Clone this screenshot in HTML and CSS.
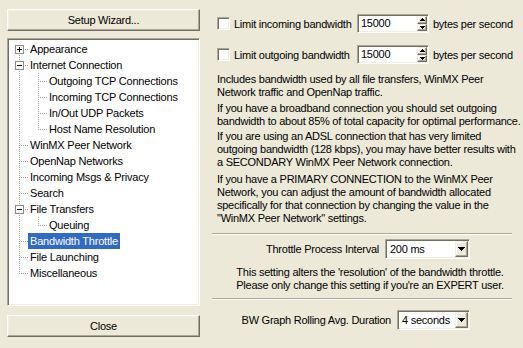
FILE: index.html
```html
<!DOCTYPE html>
<html lang="en">
<head>
    <meta charset="UTF-8">
    <meta name="viewport" content="width=device-width, initial-scale=1.0">
    <title>Preferences - Bandwidth Throttle</title>
    <link rel="stylesheet" href="styles.css">
</head>
<body>
    <div class="dialog">
        <div class="sidebar">
            <button class="btn">Setup Wizard...</button>
            <ul class="tree sunken">
                <li class="node"><span class="conn first"><svg class="toggle" width="9" height="9" viewBox="0 0 9 9"><rect x="0.5" y="0.5" width="8" height="8" fill="#fff" stroke="#8c8c8c"/><path d="M2 4.5h5M4.5 2v5" stroke="#000"/></svg></span><span class="label">Appearance</span></li>
                <li class="node"><span class="conn tee"><svg class="toggle" width="9" height="9" viewBox="0 0 9 9"><rect x="0.5" y="0.5" width="8" height="8" fill="#fff" stroke="#8c8c8c"/><path d="M2 4.5h5" stroke="#000"/></svg></span><span class="label">Internet Connection</span></li>
                <li class="node"><span class="conn pipe"></span><span class="conn tee"></span><span class="label">Outgoing TCP Connections</span></li>
                <li class="node"><span class="conn pipe"></span><span class="conn tee"></span><span class="label">Incoming TCP Connections</span></li>
                <li class="node"><span class="conn pipe"></span><span class="conn tee"></span><span class="label">In/Out UDP Packets</span></li>
                <li class="node"><span class="conn pipe"></span><span class="conn ell"></span><span class="label">Host Name Resolution</span></li>
                <li class="node"><span class="conn tee"></span><span class="label">WinMX Peer Network</span></li>
                <li class="node"><span class="conn tee"></span><span class="label">OpenNap Networks</span></li>
                <li class="node"><span class="conn tee"></span><span class="label">Incoming Msgs &amp; Privacy</span></li>
                <li class="node"><span class="conn tee"></span><span class="label">Search</span></li>
                <li class="node"><span class="conn tee"><svg class="toggle" width="9" height="9" viewBox="0 0 9 9"><rect x="0.5" y="0.5" width="8" height="8" fill="#fff" stroke="#8c8c8c"/><path d="M2 4.5h5" stroke="#000"/></svg></span><span class="label">File Transfers</span></li>
                <li class="node"><span class="conn pipe"></span><span class="conn ell"></span><span class="label">Queuing</span></li>
                <li class="node"><span class="conn tee"></span><span class="label selected">Bandwidth Throttle</span></li>
                <li class="node"><span class="conn tee"></span><span class="label">File Launching</span></li>
                <li class="node"><span class="conn ell"></span><span class="label">Miscellaneous</span></li>
            </ul>
            <button class="btn">Close</button>
        </div>

        <div class="panel">
            <div class="limit-row">
                <span class="check sunken"></span>
                <span class="limit-label">Limit incoming bandwidth</span>
                <div class="spin sunken">
                    <span class="spin-value">15000</span>
                    <span class="spin-btns">
                        <span class="spin-btn raised"><svg width="5" height="3" viewBox="0 0 5 3"><path d="M2 0h1v1h1v1h1v1h-5v-1h1v-1h1z" fill="#000"/></svg></span>
                        <span class="spin-btn raised"><svg width="5" height="3" viewBox="0 0 5 3"><path d="M0 0h5v1h-1v1h-1v1h-1v-1h-1v-1h-1z" fill="#000"/></svg></span>
                    </span>
                </div>
                <span>bytes per second</span>
            </div>
            <div class="limit-row">
                <span class="check sunken"></span>
                <span class="limit-label">Limit outgoing bandwidth</span>
                <div class="spin sunken">
                    <span class="spin-value">15000</span>
                    <span class="spin-btns">
                        <span class="spin-btn raised"><svg width="5" height="3" viewBox="0 0 5 3"><path d="M2 0h1v1h1v1h1v1h-5v-1h1v-1h1z" fill="#000"/></svg></span>
                        <span class="spin-btn raised"><svg width="5" height="3" viewBox="0 0 5 3"><path d="M0 0h5v1h-1v1h-1v1h-1v-1h-1v-1h-1z" fill="#000"/></svg></span>
                    </span>
                </div>
                <span>bytes per second</span>
            </div>

            <p class="note note-intro">Includes bandwidth used by all file transfers, WinMX Peer<br>Network traffic and OpenNap traffic.</p>
            <p class="note gap-m">If you have a broadband connection you should set outgoing<br>bandwidth to about 85% of total capacity for optimal performance.</p>
            <p class="note gap-s">If you are using an ADSL connection that has very limited<br>outgoing bandwidth (128 kbps), you may have better results with<br>a SECONDARY WinMX Peer Network connection.</p>
            <p class="note gap-l">If you have a PRIMARY CONNECTION to the WinMX Peer<br>Network, you can adjust the amount of bandwidth allocated<br>specifically for that connection by changing the value in the<br>"WinMX Peer Network" settings.</p>

            <hr class="sep">

            <div class="combo-row interval-row">
                <span>Throttle Process Interval</span>
                <div class="combo interval-combo sunken">
                    <span class="combo-value">200 ms</span>
                    <span class="combo-btn raised"><svg width="7" height="4" viewBox="0 0 7 4"><path d="M0 0h7v1h-1v1h-1v1h-1v1h-1v-1h-1v-1h-1v-1h-1z" fill="#000"/></svg></span>
                </div>
            </div>
            <p class="note note-center">This setting alters the 'resolution' of the bandwidth throttle.<br>Please only change this setting if you're an EXPERT user.</p>

            <hr class="sep">

            <div class="combo-row graph-row">
                <span>BW Graph Rolling Avg. Duration</span>
                <div class="combo graph-combo sunken">
                    <span class="combo-value">4 seconds</span>
                    <span class="combo-btn raised"><svg width="7" height="4" viewBox="0 0 7 4"><path d="M0 0h7v1h-1v1h-1v1h-1v1h-1v-1h-1v-1h-1v-1h-1z" fill="#000"/></svg></span>
                </div>
            </div>
        </div>
    </div>
</body>
</html>
```

FILE: styles.css
```css
html,
body {
    margin: 0;
    height: 100%;
    overflow: hidden;
}

body {
    background-color: #ece9d8;
    font-family: "Liberation Sans", Arial, sans-serif;
    font-size: 11px;
    letter-spacing: -0.25px;
    color: #000;
}

.dialog {
    display: flex;
    padding: 9px 0 0 7px;
}

/* shared 3d borders */
.sunken {
    border: 1px solid;
    border-color: #aca899 #fff #fff #aca899;
    box-shadow: inset 1px 1px #716f64, inset -1px -1px #f1efe2;
    background-color: #fff;
}

.raised {
    border: 1px solid;
    border-color: #f1efe2 #716f64 #716f64 #f1efe2;
    box-shadow: inset -1px -1px #aca899, inset 1px 1px #fff;
    background-color: #ece9d8;
}

/* left side */
.sidebar {
    display: flex;
    flex-direction: column;
    flex: none;
    width: 193px;
}

.btn {
    height: 22px;
    padding: 0;
    font: inherit;
    letter-spacing: inherit;
    color: #000;
    background-color: #ece9d8;
    border: 1px solid;
    border-color: #fff #716f64 #716f64 #fff;
    box-shadow: inset -1px -1px #aca899, inset 1px 1px #f1efe2;
}

.tree {
    list-style: none;
    margin: 7px 0 9px;
    padding: 2px 1px 1px;
    height: 268px;
    box-sizing: border-box;
    letter-spacing: -0.2px;
}

.node {
    display: flex;
    height: 16px;
}

.conn {
    flex: none;
    width: 19px;
    height: 16px;
    padding: 4px 0 0 6px;
    box-sizing: border-box;
    background-repeat: no-repeat;
}

.toggle {
    display: block;
}

.tee {
    background-image:
        repeating-linear-gradient(#a0a0a0 0 1px, transparent 1px 2px),
        repeating-linear-gradient(90deg, #a0a0a0 0 1px, transparent 1px 2px);
    background-size: 1px 16px, 9px 1px;
    background-position: 10px 0, 10px 8px;
}

.ell {
    background-image:
        repeating-linear-gradient(#a0a0a0 0 1px, transparent 1px 2px),
        repeating-linear-gradient(90deg, #a0a0a0 0 1px, transparent 1px 2px);
    background-size: 1px 9px, 9px 1px;
    background-position: 10px 0, 10px 8px;
}

.first {
    background-image:
        repeating-linear-gradient(#a0a0a0 0 1px, transparent 1px 2px),
        repeating-linear-gradient(90deg, #a0a0a0 0 1px, transparent 1px 2px);
    background-size: 1px 8px, 9px 1px;
    background-position: 10px 8px, 10px 8px;
}

.pipe {
    background-image: repeating-linear-gradient(#a0a0a0 0 1px, transparent 1px 2px);
    background-size: 1px 16px;
    background-position: 10px 0;
}

.label {
    padding: 0 2px;
    line-height: 16px;
    white-space: nowrap;
}

.label.selected {
    background-color: #316ac5;
    color: #fff;
}

/* right side */
.panel {
    flex: none;
    width: 305px;
    margin-left: 12px;
    padding: 5px 0 0 5px;
    box-sizing: border-box;
}

.limit-row {
    display: flex;
    align-items: center;
    height: 19px;
    white-space: nowrap;
}

.limit-row + .limit-row {
    margin-top: 12px;
}

.check {
    flex: none;
    width: 13px;
    height: 13px;
    box-sizing: border-box;
    margin-right: 4px;
}

.limit-label {
    flex: none;
    width: 123px;
}

.spin {
    display: flex;
    flex: none;
    width: 72px;
    height: 19px;
    padding: 1px;
    box-sizing: border-box;
    margin-right: 4px;
}

.spin-value {
    flex: 1;
    padding-left: 2px;
    line-height: 15px;
}

.spin-btns {
    display: flex;
    flex-direction: column;
    width: 10px;
}

.spin-btn {
    display: flex;
    flex: 1;
    align-items: center;
    justify-content: center;
}

.spin-btn svg,
.combo-btn svg {
    display: block;
}

.note {
    margin: 0;
    line-height: 13px;
    white-space: nowrap;
}

.note-intro {
    margin-top: 9px;
}

.gap-s {
    margin-top: 2px;
}

.gap-m {
    margin-top: 3px;
}

.gap-l {
    margin-top: 4px;
}

.sep {
    height: 0;
    border: 0;
    border-top: 1px solid #aca899;
    border-bottom: 1px solid #fff;
    margin: 8px 5px 0 -5px;
}

.combo-row {
    display: flex;
    justify-content: flex-end;
    align-items: center;
    gap: 6px;
    height: 20px;
    padding-right: 47px;
    white-space: nowrap;
}

.interval-row {
    margin-top: 4px;
}

.graph-row {
    margin-top: 10px;
}

.combo {
    display: flex;
    flex: none;
    height: 20px;
    padding: 1px;
    box-sizing: border-box;
}

.interval-combo {
    width: 85px;
}

.graph-combo {
    width: 73px;
}

.combo-value {
    flex: 1;
    padding-left: 3px;
    line-height: 16px;
}

.combo-btn {
    display: flex;
    flex: none;
    width: 11px;
    align-items: center;
    justify-content: center;
}

.note-center {
    margin-top: 7px;
    padding-left: 6px;
    text-align: center;
}

.note-center + .sep {
    margin-top: 6px;
}
```
